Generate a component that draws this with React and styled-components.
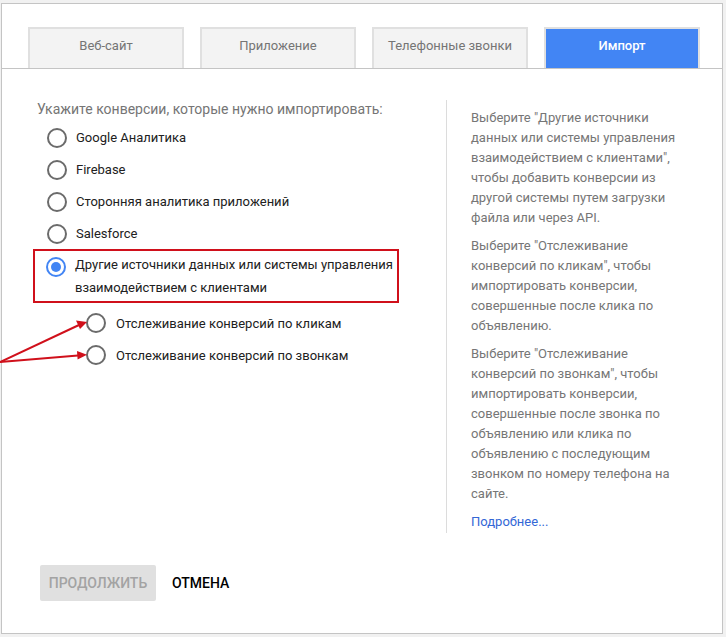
import React from 'react';
import styled, { createGlobalStyle } from 'styled-components';

const GlobalStyle = createGlobalStyle`
  html, body {
    margin: 0;
    padding: 0;
    background: #f1f1f1;
  }
  body {
    font-family: Roboto, 'Liberation Sans', Arial, sans-serif;
  }
`;

const tabs = ['Веб-сайт', 'Приложение', 'Телефонные звонки', 'Импорт'];

const options = [
  'Google Аналитика',
  'Firebase',
  'Сторонняя аналитика приложений',
  'Salesforce',
];

const subOptions = [
  'Отслеживание конверсий по кликам',
  'Отслеживание конверсий по звонкам',
];

const help = [
  'Выберите "Другие источники данных или системы управления взаимодействием с клиентами", чтобы добавить конверсии из другой системы путем загрузки файла или через API.',
  'Выберите "Отслеживание конверсий по кликам", чтобы импортировать конверсии, совершенные после клика по объявлению.',
  'Выберите "Отслеживание конверсий по звонкам", чтобы импортировать конверсии, совершенные после звонка по объявлению или клика по объявлению с последующим звонком по номеру телефона на сайте.',
];

const App = () => {
  return (
    <>
      <GlobalStyle />
      <Frame>
        <TabBar>
          {tabs.map((t, i) => (
            <Tab key={t} $active={i === tabs.length - 1}>
              {t}
            </Tab>
          ))}
        </TabBar>

        <Body>
          <LeftColumn>
            <Prompt>Укажите конверсии, которые нужно импортировать:</Prompt>
            {options.map((o) => (
              <OptionRow key={o}>
                <Radio />
                <OptionText>{o}</OptionText>
              </OptionRow>
            ))}
            <Highlight>
              <SelectedRow>
                <Radio $checked />
                <OptionText $multiline>
                  Другие источники данных или системы управления взаимодействием
                  с клиентами
                </OptionText>
              </SelectedRow>
            </Highlight>
            <SubList>
              {subOptions.map((o) => (
                <SubRow key={o}>
                  <Radio />
                  <SubText>{o}</SubText>
                </SubRow>
              ))}
            </SubList>
          </LeftColumn>

          <HelpColumn>
            {help.map((p, i) => (
              <HelpText key={i}>{p}</HelpText>
            ))}
            <MoreLink href="#">Подробнее...</MoreLink>
          </HelpColumn>
        </Body>

        <Footer>
          <PrimaryButton disabled>ПРОДОЛЖИТЬ</PrimaryButton>
          <TextButton>ОТМЕНА</TextButton>
        </Footer>

        <Arrows width="100" height="64" viewBox="0 0 100 64">
          <line x1="0" y1="52" x2="79" y2="15" stroke="#d0101b" strokeWidth="2" />
          <polygon points="87,12 76,10.5 80,19" fill="#d0101b" />
          <line x1="0" y1="52" x2="78" y2="45.5" stroke="#d0101b" strokeWidth="2" />
          <polygon points="87,44.8 77,41 77.6,49.5" fill="#d0101b" />
        </Arrows>
      </Frame>
    </>
  );
};

export default App;

const Frame = styled.div`
  position: relative;
  box-sizing: border-box;
  width: 722px;
  height: 631px;
  margin: 3px 0 0 1px;
  background: #fff;
  border: 1px solid #c4c4c4;
  display: flex;
  flex-direction: column;
`;

const TabBar = styled.div`
  display: flex;
  gap: 16px;
  padding: 23px 0 0 26px;
  border-bottom: 1px solid #c4c4c4;
`;

const Tab = styled.div`
  box-sizing: border-box;
  width: 156px;
  height: 41px;
  display: flex;
  align-items: center;
  justify-content: center;
  padding-bottom: 7px;
  border: 2px solid #e0e0e0;
  border-bottom: none;
  background: ${(p) => (p.$active ? '#4285f4' : '#f3f3f3')};
  color: ${(p) => (p.$active ? '#fff' : '#757575')};
  font-size: 13px;
  font-weight: ${(p) => (p.$active ? 500 : 400)};
`;

const Body = styled.div`
  display: flex;
  padding-top: 31px;
`;

const LeftColumn = styled.div`
  box-sizing: border-box;
  width: 444px;
  padding-left: 35px;
  display: flex;
  flex-direction: column;
`;

const Prompt = styled.div`
  font-size: 14px;
  line-height: 16px;
  color: #757575;
  margin: 1px 0 5px;
`;

const OptionRow = styled.div`
  display: flex;
  align-items: center;
  height: 32px;
  padding-left: 10px;
`;

const Radio = styled.span`
  box-sizing: border-box;
  flex: none;
  width: 20px;
  height: 20px;
  border-radius: 50%;
  border: 2px solid ${(p) => (p.$checked ? '#4285f4' : '#6b6b6b')};
  display: flex;
  align-items: center;
  justify-content: center;
  &::after {
    content: '';
    display: ${(p) => (p.$checked ? 'block' : 'none')};
    width: 10px;
    height: 10px;
    border-radius: 50%;
    background: #4285f4;
  }
`;

const OptionText = styled.span`
  margin-left: 9px;
  font-size: 13px;
  line-height: ${(p) => (p.$multiline ? '23px' : '16px')};
  color: #212121;
`;

const Highlight = styled.div`
  box-sizing: border-box;
  width: 366px;
  margin: -1px 0 0 -4px;
  padding: 2px 0 2px 11px;
  border: 2px solid #d0101b;
`;

const SelectedRow = styled.div`
  display: flex;
  align-items: flex-start;
  & > span:first-child {
    margin-top: 4px;
  }
`;

const SubList = styled.div`
  margin-top: 4px;
  padding-left: 49px;
`;

const SubRow = styled.div`
  display: flex;
  align-items: center;
  height: 32px;
`;

const SubText = styled.span`
  margin-left: 10px;
  font-size: 13px;
  color: #212121;
`;

const HelpColumn = styled.div`
  box-sizing: border-box;
  height: 433px;
  width: 262px;
  padding: 8px 0 0 24px;
  border-left: 1px solid #dcdcdc;
`;

const HelpText = styled.p`
  width: 212px;
  margin: 0 0 8px;
  font-size: 13px;
  line-height: 20px;
  color: #767676;
`;

const MoreLink = styled.a`
  display: block;
  font-size: 13px;
  line-height: 20px;
  color: #3367d6;
  text-decoration: none;
`;

const Footer = styled.div`
  display: flex;
  align-items: center;
  gap: 16px;
  padding: 32px 0 0 38px;
`;

const PrimaryButton = styled.button`
  width: 116px;
  height: 36px;
  border: none;
  border-radius: 2px;
  background: #e0e0e0;
  color: #a3a3a3;
  font-family: Roboto, 'Liberation Sans', Arial, sans-serif;
  font-size: 14px;
  font-weight: 500;
  padding: 0;
`;

const TextButton = styled.button`
  border: none;
  background: none;
  padding: 0;
  color: #000;
  font-family: Roboto, 'Liberation Sans', Arial, sans-serif;
  font-size: 14px;
  font-weight: 500;
`;

const Arrows = styled.svg`
  position: absolute;
  left: -2px;
  top: 306px;
  pointer-events: none;
`;
